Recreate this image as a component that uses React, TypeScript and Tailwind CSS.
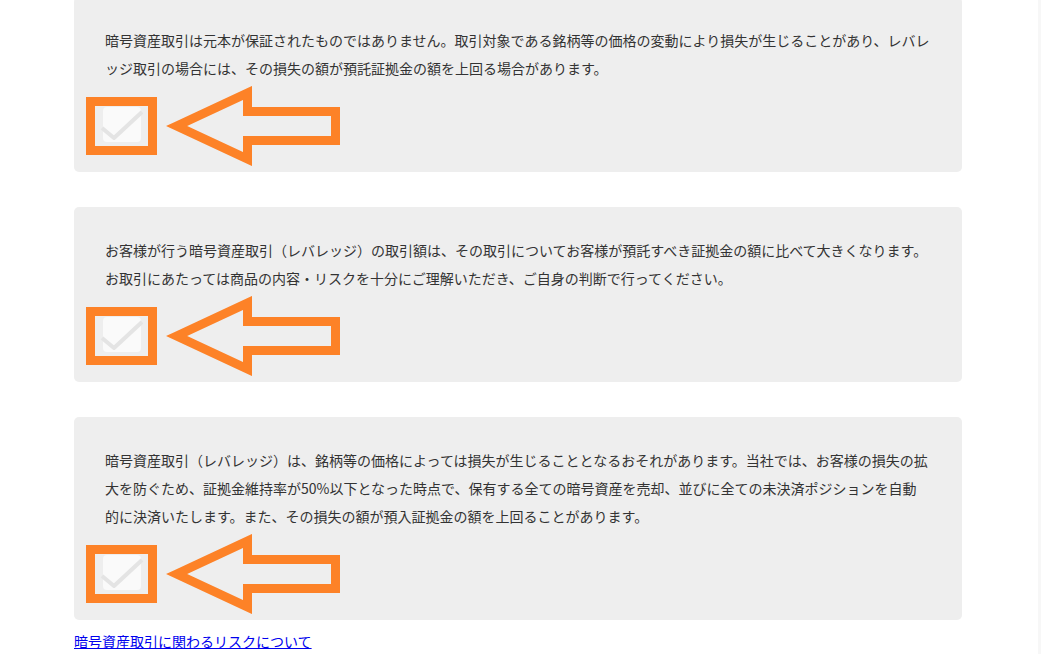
import React from 'react';

const ORANGE = '#fd8227';

const NOTES: string[][] = [
  [
    '暗号資産取引は元本が保証されたものではありません。取引対象である銘柄等の価格の変動により損失が生じることがあり、レバレ',
    'ッジ取引の場合には、その損失の額が預託証拠金の額を上回る場合があります。',
  ],
  [
    'お客様が行う暗号資産取引（レバレッジ）の取引額は、その取引についてお客様が預託すべき証拠金の額に比べて大きくなります。',
    'お取引にあたっては商品の内容・リスクを十分にご理解いただき、ご自身の判断で行ってください。',
  ],
  [
    '暗号資産取引（レバレッジ）は、銘柄等の価格によっては損失が生じることとなるおそれがあります。当社では、お客様の損失の拡',
    '大を防ぐため、証拠金維持率が50%以下となった時点で、保有する全ての暗号資産を売却、並びに全ての未決済ポジションを自動',
    '的に決済いたします。また、その損失の額が預入証拠金の額を上回ることがあります。',
  ],
];

// checkbox with the orange box + arrow marked over it
function MarkedCheckbox() {
  return (
    <div className="relative ml-[12px] mt-[15px] h-[58px] w-[260px]">
      <span className="absolute left-[17px] top-[10px] block h-[35px] w-[38px] rounded-[4px] bg-[#fafafa]">
        <svg className="absolute left-0 top-0 overflow-visible" width="38" height="35" viewBox="0 0 38 35">
          <polyline
            points="-1,21 11,31 39,5"
            fill="none"
            stroke="#e4e4e4"
            strokeWidth="4"
            strokeLinejoin="round"
          />
        </svg>
      </span>
      <svg className="absolute left-0 top-[-11px]" width="260" height="80" viewBox="0 0 260 80">
        <rect x="4.5" y="15.5" width="62" height="49" fill="none" stroke={ORANGE} strokeWidth="9" />
        <polygon
          points="90.7,40 161.5,7 161.5,25.5 249.5,25.5 249.5,54.5 161.5,54.5 161.5,73"
          fill="none"
          stroke={ORANGE}
          strokeWidth="9"
          strokeLinejoin="miter"
        />
      </svg>
    </div>
  );
}

export default function App() {
  return (
    <div
      className="flex h-[654px] overflow-hidden bg-white text-[14px] text-[#333333]"
      style={{ fontFamily: '"Noto Sans CJK JP", "Noto Sans", sans-serif' }}
    >
      <div className="flex-1 pl-[74px]">
        <div className="-mt-[3px] flex w-[888px] flex-col gap-[35px]">
          {NOTES.map((lines, i) => (
            <div key={i} className="rounded-[5px] bg-[#eeeeee] pt-[29px] pb-[17px]">
              <div className="px-[31px] leading-[28px]">
                {lines.map((l, j) => (
                  <span key={j} className="block whitespace-nowrap">
                    {l}
                  </span>
                ))}
              </div>
              <MarkedCheckbox />
            </div>
          ))}
        </div>
        <a href="#" className="mt-[11px] inline-block leading-[20px] text-[#0000ee] underline">
          暗号資産取引に関わるリスクについて
        </a>
      </div>
      <div className="w-[3px] bg-[#f7f7f7]" />
    </div>
  );
}
